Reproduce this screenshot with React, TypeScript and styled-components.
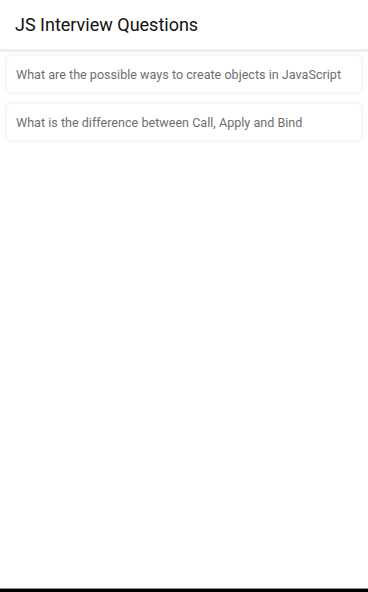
import React from "react";
import styled, { createGlobalStyle } from "styled-components";

const Global = createGlobalStyle`
  html, body { margin: 0; padding: 0; background: #fff; }
  body { font-family: Roboto, "Noto Sans", sans-serif; }
`;

const Screen = styled.div`
  width: 368px;
  height: 592px;
  display: flex;
  flex-direction: column;
  background: #fff;
  overflow: hidden;
`;

const Header = styled.header`
  height: 49px;
  display: flex;
  align-items: center;
  padding: 0 15px;
  background: #fff;
  border-bottom: 3px solid #eeeeee;
  flex-shrink: 0;
`;

const Title = styled.h1`
  margin: 0;
  font-size: 18px;
  font-weight: 400;
  color: #111;
`;

const List = styled.div`
  flex: 1;
  display: flex;
  flex-direction: column;
  gap: 10px;
  padding: 3px 6px 0 6px;
`;

const Card = styled.div`
  height: 36px;
  display: flex;
  align-items: center;
  padding: 0 9px;
  border-radius: 4px;
  background: #fff;
  box-shadow: 0 0 3px rgba(0, 0, 0, 0.07);
  border: 1px solid #f6f6f6;
`;

const Question = styled.span`
  font-size: 12.6px;
  color: #6f6f6f;
  white-space: nowrap;
`;

const NavBar = styled.div`
  height: 3px;
  background: #000;
  border-top: 1px solid #888;
  flex-shrink: 0;
`;

const questions = [
  "What are the possible ways to create objects in JavaScript",
  "What is the difference between Call, Apply and Bind",
];

export default function App() {
  return (
    <>
      <Global />
      <Screen>
        <Header>
          <Title>JS Interview Questions</Title>
        </Header>
        <List>
          {questions.map((q) => (
            <Card key={q}>
              <Question>{q}</Question>
            </Card>
          ))}
        </List>
        <NavBar />
      </Screen>
    </>
  );
}
